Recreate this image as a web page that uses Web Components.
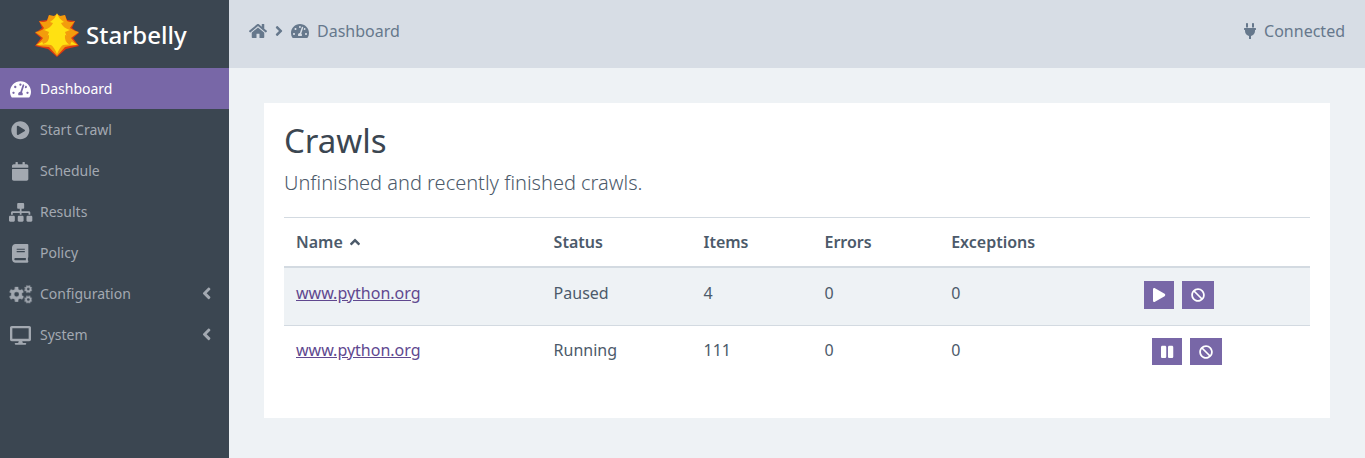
<!DOCTYPE html>
<html lang="en"><head><meta charset="utf-8"><title>Starbelly</title>
<style>html,body{margin:0;height:100%}body{font:16px/24px "Noto Sans","Open Sans",sans-serif;color:#4c5a6a;background:#eef2f5;overflow:hidden}</style></head>
<body>
<sb-app>
<sb-sidebar slot="side">
<sb-nav icon="tach" active>Dashboard</sb-nav>
<sb-nav icon="playc">Start Crawl</sb-nav>
<sb-nav icon="cal">Schedule</sb-nav>
<sb-nav icon="site">Results</sb-nav>
<sb-nav icon="book">Policy</sb-nav>
<sb-nav icon="cogs" more>Configuration</sb-nav>
<sb-nav icon="desk" more>System</sb-nav>
</sb-sidebar>
<sb-topbar slot="top">Dashboard<span slot="status">Connected</span></sb-topbar>
<sb-card>
<span slot="title">Crawls</span><span slot="lead">Unfinished and recently finished crawls.</span>
<sb-head></sb-head>
<sb-row name="www.python.org" status="Paused" items="4" errors="0" exceptions="0" action="play"></sb-row>
<sb-row name="www.python.org" status="Running" items="111" errors="0" exceptions="0" action="pause"></sb-row>
</sb-card>
</sb-app>
<script>
const teeth=(cx,cy,r,w,n,o)=>{let s='';for(let i=0;i<n;i++)s+=`<rect x="${cx-w/2}" y="${cy-o}" width="${w}" height="${2*o}" rx="${w/6}" transform="rotate(${i*180/n+(n===3?0:22.5)} ${cx} ${cy})"/>`;return s+`<circle cx="${cx}" cy="${cy}" r="${r}"/>`};
const ICONS={
tach:['0 0 576 512','<path d="M288 32C128.94 32 0 160.94 0 320c0 52.8 14.25 102.26 39.06 144.8 5.61 9.62 16.3 15.2 27.44 15.2h443c11.14 0 21.83-5.58 27.44-15.2C561.75 422.26 576 372.8 576 320c0-159.06-128.94-288-288-288zm0 64c14.71 0 26.58 10.13 30.32 23.65-1.11 2.26-2.64 4.23-3.45 6.67l-9.22 27.67c-5.13 3.49-10.97 6.01-17.64 6.01-17.67 0-32-14.33-32-32S270.33 96 288 96zM96 384c-17.67 0-32-14.33-32-32s14.33-32 32-32 32 14.33 32 32-14.33 32-32 32zm48-160c-17.67 0-32-14.33-32-32s14.33-32 32-32 32 14.33 32 32-14.33 32-32 32zm246.77-72.41l-61.33 184C343.13 347.33 352 364.54 352 384c0 11.72-3.38 22.55-8.88 32H232.88c-5.5-9.45-8.88-20.28-8.88-32 0-33.94 26.5-61.43 59.9-63.59l61.34-184.01c4.17-12.56 17.73-19.45 30.36-15.17 12.57 4.19 19.35 17.79 15.17 30.36zm14.66 57.2l15.52-46.55c3.47-1.29 7.13-2.23 11.05-2.23 17.67 0 32 14.33 32 32s-14.33 32-32 32c-11.38-.01-20.89-6.28-26.57-15.22zM480 384c-17.67 0-32-14.33-32-32s14.33-32 32-32 32 14.33 32 32-14.33 32-32 32z"/>'],
playc:['0 0 512 512','<path d="M256 8C119 8 8 119 8 256s111 248 248 248 248-111 248-248S393 8 256 8zm115.7 272l-176 101c-15.8 8.8-35.7-2.5-35.7-21V152c0-18.4 19.8-29.8 35.7-21l176 107c16.4 9.2 16.4 32.9 0 42z"/>'],
cal:['0 0 448 512','<path d="M12 192h424c6.6 0 12 5.4 12 12v260c0 26.5-21.5 48-48 48H48c-26.500 0-48-21.500-48-48V204c0-6.600 5.400-12 12-12zm436-44v-36c0-26.500-21.500-48-48-48h-48V12c0-6.600-5.400-12-12-12h-40c-6.600 0-12 5.400-12 12v52H160V12c0-6.600-5.400-12-12-12h-40c-6.600 0-12 5.400-12 12v52H48C21.500 64 0 85.500 0 112v36c0 6.600 5.400 12 12 12h424c6.600 0 12-5.400 12-12z"/>'],
site:['0 0 640 512','<path d="M128 352H32c-17.670 0-32 14.330-32 32v96c0 17.670 14.330 32 32 32h96c17.670 0 32-14.330 32-32v-96c0-17.670-14.330-32-32-32zm-24-80h192v48h48v-48h192v48h48v-57.590c0-21.170-17.230-38.410-38.410-38.410H344v-64h40c17.670 0 32-14.330 32-32V32c0-17.670-14.330-32-32-32H256c-17.670 0-32 14.330-32 32v96c0 17.670 14.330 32 32 32h40v64H94.410C73.230 224 56 241.230 56 262.410V320h48v-48zm264 80h-96c-17.670 0-32 14.330-32 32v96c0 17.670 14.330 32 32 32h96c17.670 0 32-14.330 32-32v-96c0-17.670-14.330-32-32-32zm240 0h-96c-17.670 0-32 14.330-32 32v96c0 17.670 14.330 32 32 32h96c17.670 0 32-14.330 32-32v-96c0-17.670-14.330-32-32-32z"/>'],
book:['0 0 448 512','<path d="M448 360V24c0-13.300-10.700-24-24-24H96C43 0 0 43 0 96v320c0 53 43 96 96 96h328c13.300 0 24-10.700 24-24v-16c0-7.500-3.500-14.300-8.900-18.700-4.200-15.400-4.200-59.300 0-74.700 5.400-4.300 8.900-11.100 8.900-18.600zM128 134c0-3.300 2.700-6 6-6h212c3.300 0 6 2.700 6 6v20c0 3.300-2.700 6-6 6H134c-3.300 0-6-2.700-6-6v-20zm0 64c0-3.300 2.700-6 6-6h212c3.300 0 6 2.700 6 6v20c0 3.300-2.700 6-6 6H134c-3.300 0-6-2.700-6-6v-20zm253.400 250H96c-17.700 0-32-14.300-32-32 0-17.600 14.400-32 32-32h285.400c-1.900 17.100-1.900 46.900 0 64z"/>'],
cogs:['0 0 640 512',`<mask id="m"><path fill="#fff" d="M0 0h640v512H0z"/><g fill="#000"><circle cx="208" cy="256" r="66"/><circle cx="529" cy="112" r="37"/><circle cx="529" cy="400" r="37"/></g></mask><g mask="url(#m)">${teeth(208,256,150,100,3,205)}${teeth(529,112,78,46,4,108)}${teeth(529,400,78,46,4,108)}</g>`],
desk:['0 0 576 512','<path d="M528 0H48C21.500 0 0 21.500 0 48v320c0 26.500 21.500 48 48 48h192l-16 48h-72c-13.300 0-24 10.700-24 24s10.700 24 24 24h272c13.300 0 24-10.700 24-24s-10.700-24-24-24h-72l-16-48h192c26.500 0 48-21.500 48-48V48c0-26.500-21.500-48-48-48zm-16 352H64V64h448v288z"/>'],
left:['0 0 256 512','<path d="M31.700 239l136-136c9.400-9.400 24.600-9.400 33.900 0l22.600 22.600c9.400 9.400 9.400 24.600 0 33.900L127.900 256l96.400 96.400c9.400 9.400 9.400 24.600 0 33.900L201.700 409c-9.400 9.400-24.600 9.400-33.900 0l-136-136c-9.500-9.400-9.500-24.600-.1-34z"/>'],
home:['0 0 576 512','<path d="M488 312.700V456c0 13.300-10.700 24-24 24H348c-6.600 0-12-5.400-12-12V356c0-6.600-5.400-12-12-12h-72c-6.600 0-12 5.400-12 12v112c0 6.600-5.400 12-12 12H112c-13.300 0-24-10.700-24-24V312.700c0-3.600 1.600-7 4.400-9.300l188-154.800c4.400-3.600 10.800-3.600 15.300 0l188 154.800c2.700 2.300 4.300 5.700 4.300 9.300zm83.600-60.900L488 182.900V44.400c0-6.600-5.400-12-12-12h-56c-6.600 0-12 5.400-12 12V117l-89.500-73.700c-17.700-14.600-43.300-14.600-61 0L4.400 251.800c-5.100 4.200-5.800 11.800-1.600 16.900l25.500 31c4.200 5.100 11.800 5.800 16.900 1.600l235.200-193.700c4.400-3.600 10.800-3.600 15.300 0l235.200 193.700c5.100 4.200 12.700 3.500 16.900-1.600l25.500-31c4.200-5.200 3.400-12.700-1.700-16.900z"/>'],
plug:['0 0 384 512','<path d="M256 144V32c0-17.673 14.327-32 32-32s32 14.327 32 32v112h-64zm112 16H16c-8.837 0-16 7.163-16 16v32c0 8.837 7.163 16 16 16h16v32c0 77.406 54.969 141.971 128 156.796V512h64v-99.204c73.031-14.825 128-79.390 128-156.796v-32h16c8.837 0 16-7.163 16-16v-32c0-8.837-7.163-16-16-16zm-240-16V32c0-17.673-14.327-32-32-32S64 14.327 64 32v112h64z"/>'],
play:['0 0 448 512','<path d="M424.400 214.700L72.400 6.600C43.800-10.300 0 6.100 0 47.900V464c0 37.500 40.700 60.100 72.400 41.300l352-208c31.400-18.500 31.500-64.100 0-82.600z"/>'],
pause:['0 0 448 512','<path d="M144 479H48c-26.500 0-48-21.500-48-48V79c0-26.500 21.500-48 48-48h96c26.500 0 48 21.500 48 48v352c0 26.500-21.500 48-48 48zm304-48V79c0-26.500-21.500-48-48-48h-96c-26.500 0-48 21.500-48 48v352c0 26.500 21.500 48 48 48h96c26.500 0 48-21.500 48-48z"/>'],
ban:['0 0 512 512','<path d="M256 8C119.034 8 8 119.033 8 256s111.034 248 248 248 248-111.034 248-248S392.967 8 256 8zm130.108 117.892c65.448 65.448 70 165.481 20.677 235.637L150.470 105.216c70.204-49.356 170.226-44.735 235.638 20.676zM125.892 386.108c-65.448-65.448-70-165.481-20.677-235.637L361.530 406.784c-70.203 49.356-170.226 44.736-235.638-20.676z"/>']
};
ICONS.right=[ICONS.left[0],`<g transform="matrix(-1 0 0 1 256 0)">${ICONS.left[1]}</g>`];
ICONS.up=['0 0 320 512','<path d="M177 159.700l136 136c9.400 9.400 9.400 24.600 0 33.900l-22.600 22.600c-9.400 9.400-24.600 9.400-33.900 0L160 255.900l-96.400 96.400c-9.400 9.400-24.600 9.400-33.900 0L7 329.700c-9.400-9.400-9.400-24.600 0-33.900l136-136c9.400-9.500 24.600-9.500 34-.1z"/>'];
function define(name,html){customElements.define(name,class extends HTMLElement{connectedCallback(){if(this.shadowRoot)return;const t=document.createElement('template');t.innerHTML=typeof html==='function'?html(this):html;this.attachShadow({mode:'open'}).append(t.content.cloneNode(true))}})}
define('sb-icon',e=>{const i=ICONS[e.getAttribute('name')],v=i[0].split(' ');return `<style>:host{display:inline-flex;flex:none;font-size:16px}svg{display:block;height:1em;width:${v[2]/512}em;fill:currentColor;overflow:visible}</style><svg viewBox="${i[0]}">${i[1]}</svg>`});
define('sb-logo',`<style>:host{display:block;width:44px;height:44px}svg{display:block}</style><svg width="44" height="44" viewBox="0 0 44 44">
<path fill="#dc3912" d="M22 1 26 4 30 2 32 7 40 8 37 15 44 20 38 25 44 33 31 36 22 44 13 36 0 33 6 25 0 20 7 15 4 8 12 7 14 2 18 4Z"/>
<path fill="#f39c0c" d="M22 1 25 3 30 2 32 8Q36 10 40 8L35 15Q39 18 44 19L36 25Q40 30 43 32 34 33 30 34L22 43 14 34Q7 34 1 32 7 27 8 25L0 19Q7 18 9 15L4 8Q8 10 12 8L14 2 19 3Z"/>
<path fill="#ffe112" d="M22 0Q23 5 29 9L26 10Q28 15 35 17L30 19Q32 27 42 32 33 31 28 32 25 34 22 41 19 34 16 32 11 31 2 32 12 27 14 19L9 17Q16 15 18 10L15 9Q21 5 22 0Z"/>
<path fill="#f39c0c" d="M30 22Q36 23 37 28L35 32Q29 29 30 22ZM14 22Q8 23 7 28L8 31Q15 29 14 22Z"/></svg>`);
define('sb-app',`<style>:host{display:grid;grid-template:68px 390px/229px 1fr;height:458px}.side{grid-row:1/3;background:#3b4651}.main{padding:35px 35px 40px}</style><div class="side"><slot name="side"></slot></div><slot name="top"></slot><div class="main"><slot></slot></div>`);
define('sb-sidebar',`<style>:host{display:block}.brand{height:68px;display:flex;align-items:center;padding:1px 0 0 35px;box-sizing:border-box;gap:7px;color:#fff;font-size:24px;font-weight:500}</style><div class="brand"><sb-logo></sb-logo><span>Starbelly</span></div><slot></slot>`);
define('sb-nav',e=>`<style>:host{display:flex;align-items:center;height:41px;color:#a3a9b1;font-size:14px;line-height:21px}:host([active]){background:#7867a7;color:#fff}.i{width:41px;display:flex;justify-content:center;margin-right:-1px;padding-top:1px}.i sb-icon{font-size:18.67px}.more{margin-left:auto;margin-right:18px;font-size:18.67px}</style><span class="i"><sb-icon name="${e.getAttribute('icon')}"></sb-icon></span><slot></slot>${e.hasAttribute('more')?'<sb-icon class="more" name="left"></sb-icon>':''}`);
define('sb-topbar',`<style>:host{display:flex;background:#d7dde5;color:#66788c;padding:19px 20px 0;align-items:flex-start}.r{display:flex;height:24px;align-items:center}.r:last-child{margin-left:auto}</style><div class="r"><sb-icon name="home"></sb-icon><sb-icon name="right" style="margin:0 8px"></sb-icon><sb-icon name="tach" style="margin-right:8px"></sb-icon><slot></slot></div><div class="r"><sb-icon name="plug" style="margin-right:8px"></sb-icon><slot name="status"></slot></div>`);
define('sb-card',`<style>:host{display:block;background:#fff;height:315px;box-sizing:border-box;padding:18px 20px}h1{margin:0 0 7px;font-size:33px;line-height:40px;font-weight:400;color:#3b4651}p{margin:0 0 19px;font-size:20px;line-height:30px;font-weight:300}</style><h1><slot name="title"></slot></h1><p><slot name="lead"></slot></p><slot></slot>`);
const cols='grid-template-columns:257.6px 149.9px 121px 126.7px 192.800px 1fr';
define('sb-head',`<style>:host{display:grid;${cols};border-top:1px solid #d3dae1;border-bottom:2px solid #d3dae1;height:48px;align-items:center;font-weight:600}span{padding-left:12px;display:flex;align-items:center}sb-icon{margin-left:7px}</style><span>Name<sb-icon name="up"></sb-icon></span><span>Status</span><span>Items</span><span>Errors</span><span>Exceptions</span>`);
define('sb-row',e=>{const a=n=>e.getAttribute(n);return `<style>:host{display:grid;${cols};height:58px;box-sizing:border-box;padding-top:13px;align-items:start}:host(:nth-of-type(1)){background:#eef2f5;border-bottom:1px solid #d3dae1}:host(:nth-of-type(2)){padding-top:12px}span{padding-left:12px}a{color:#60488f;text-decoration:underline}.b{display:flex;gap:8px;padding-left:${a('action')==='pause'?20:12}px}button{box-sizing:border-box;border:0;background:#7867a7;color:#fff;height:28px;padding:0 9px;display:flex;align-items:center;justify-content:center;width:30px}button+button{width:32px}:host(:nth-of-type(2)) button{height:27px}button sb-icon{font-size:14px}</style><span><a href="#">${a('name')}</a></span><span>${a('status')}</span><span>${a('items')}</span><span>${a('errors')}</span><span>${a('exceptions')}</span><div class="b"><button aria-label="${a('action')}"><sb-icon name="${a('action')}"></sb-icon></button><button aria-label="cancel"><sb-icon name="ban"></sb-icon></button></div>`});
</script></body></html>
